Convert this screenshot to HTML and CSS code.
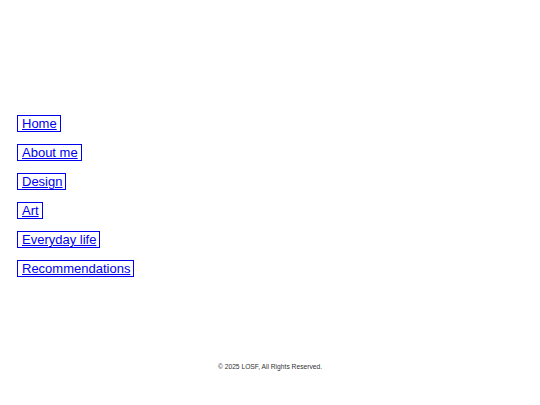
FILE: index.html
```html
<!DOCTYPE html>
<html>
<head>
<meta charset="utf-8">
<link rel="stylesheet" href="styles.css">
</head>
<body>
<nav class="nav">
  <a class="nav-link" href="#home">Home</a>
  <a class="nav-link" href="#about">About me</a>
  <a class="nav-link" href="#design">Design</a>
  <a class="nav-link" href="#art">Art</a>
  <a class="nav-link" href="#everyday">Everyday life</a>
  <a class="nav-link" href="#recommendations">Recommendations</a>
</nav>
<footer class="footer">© 2025 LOSF, All Rights Reserved.</footer>
</body>
</html>
```
FILE: styles.css
```css
html, body {
  margin: 0;
  padding: 0;
  background: #fff;
}
body {
  font-family: "Liberation Sans", Arial, sans-serif;
  width: 540px;
  height: 405px;
  display: flex;
  flex-direction: column;
}
.nav {
  display: flex;
  flex-direction: column;
  align-items: flex-start;
  gap: 12px;
  padding: 115px 0 0 17px;
}
.nav-link,
.nav-link:visited,
.nav-link:focus {
  display: block;
  color: #0000ee;
  border: 1px solid #0000ee;
  outline: none;
  padding: 0 3px 0 4px;
  font-size: 13px;
  line-height: 15px;
}
.footer {
  margin-top: 85px;
  text-align: center;
  font-size: 6.7px;
  line-height: 9px;
  color: #333;
}
```
